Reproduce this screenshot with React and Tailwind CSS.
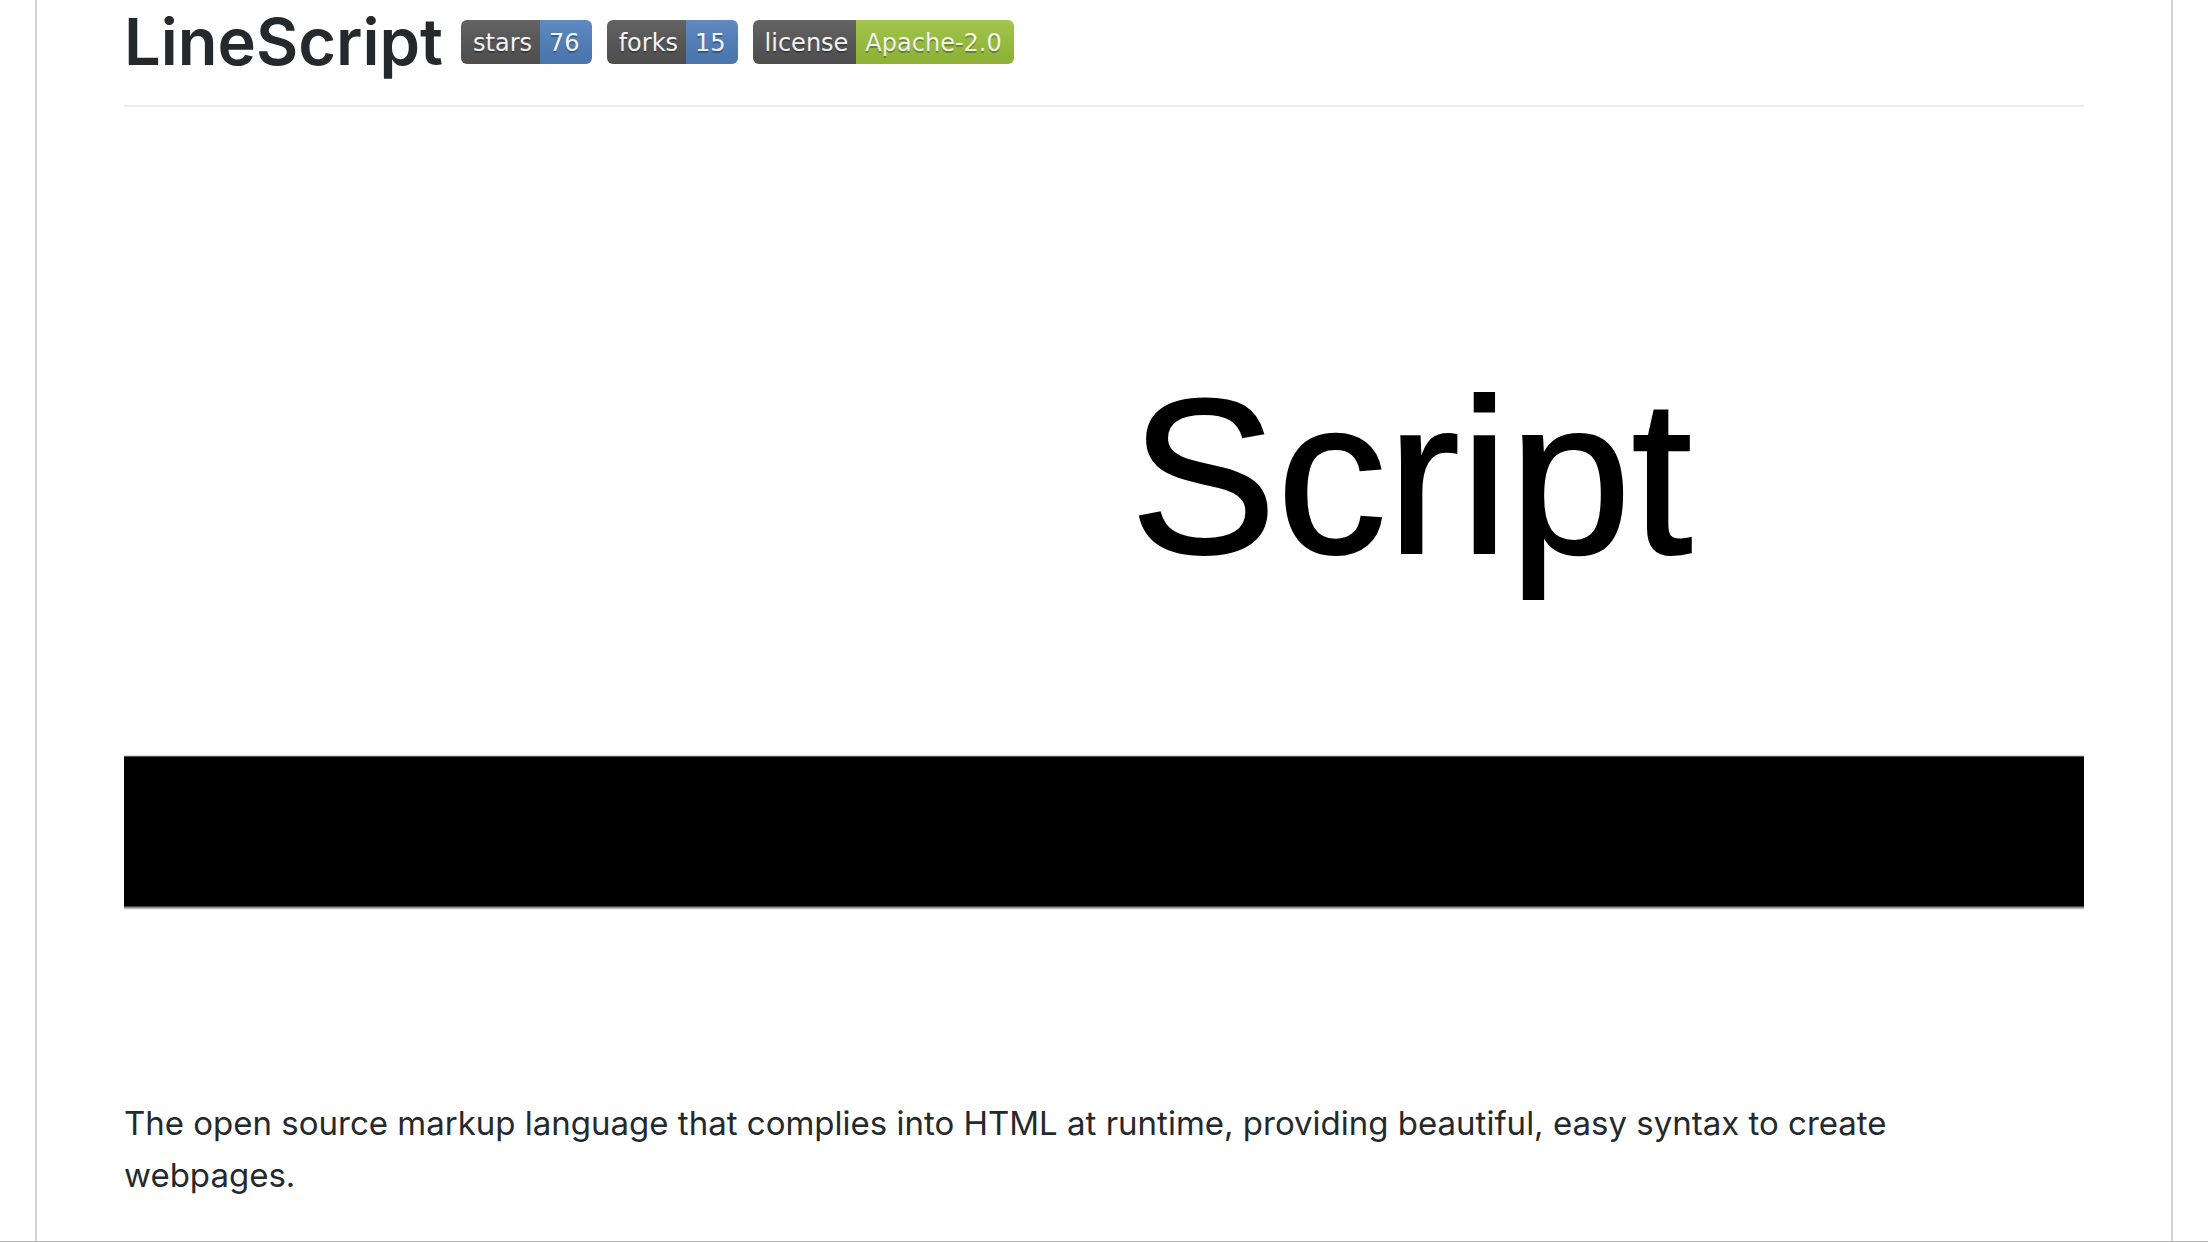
const badges = [
  { label: 'stars', value: '76', color: 'bg-[#5180bd]', href: '#stars' },
  { label: 'forks', value: '15', color: 'bg-[#5180bd]', href: '#forks' },
  { label: 'license', value: 'Apache-2.0', color: 'bg-[#9bc13c]', href: '#license' },
]

function Badge({ label, value, color, href }) {
  return (
    <a
      href={href}
      className="relative flex h-11 overflow-hidden rounded-md font-['DejaVu_Sans',sans-serif] text-[24px] leading-[47px] text-white [text-shadow:0_2px_0_rgba(1,1,1,0.3)]"
    >
      <span className="bg-[#565656] pl-3 pr-2">{label}</span>
      <span className={`pl-[9px] pr-3 ${color}`}>{value}</span>
      {/* Gloss */}
      <span className="absolute inset-0 bg-linear-to-b from-white/8 to-black/8" />
    </a>
  )
}

function Logo() {
  return (
    <svg viewBox="0 0 1960 920" className="block w-full" role="img" aria-label="LineScript logo">
      <text
        x="1006"
        y="411"
        fontSize="220"
        fill="#000"
        stroke="#000"
        strokeWidth="2"
        className="font-['Liberation_Sans',sans-serif]"
      >
        Script
      </text>
      <rect x="0" y="613" width="1960" height="1" fill="#dcdcdc" />
      <rect x="0" y="614" width="1960" height="1" fill="#505050" />
      <rect x="0" y="615" width="1960" height="149" fill="#000" />
      <rect x="0" y="764" width="1960" height="1" fill="#444" />
      <rect x="0" y="765" width="1960" height="1" fill="#8a8a8a" />
      <rect x="0" y="766" width="1960" height="1" fill="#c0c0c0" />
      <rect x="0" y="767" width="1960" height="1" fill="#e8e8e8" />
    </svg>
  )
}

export default function App() {
  return (
    <div className="flex min-h-screen flex-col border-b border-[#b0b0b0] bg-white font-[Inter,sans-serif] text-[#24292e]">
      <article className="mx-[35px] flex-1 border-x-2 border-[#d1d5da] px-[87px]">
        {/* Title */}
        <header className="flex items-center gap-[18px] border-b-2 border-[#eaecef] pb-[21px]">
          <h1 className="text-[65px] leading-[84px] font-semibold">LineScript</h1>
          <div className="flex gap-[15px]">
            {badges.map((badge) => (
              <Badge key={badge.label} {...badge} />
            ))}
          </div>
        </header>

        <div className="mt-[35px]">
          <Logo />
        </div>

        {/* Description */}
        <p className="mt-[35px] pr-16 text-[33px] leading-[52px]">
          The open source markup language that complies into HTML at runtime, providing beautiful,
          easy syntax to create webpages.
        </p>
      </article>
    </div>
  )
}
